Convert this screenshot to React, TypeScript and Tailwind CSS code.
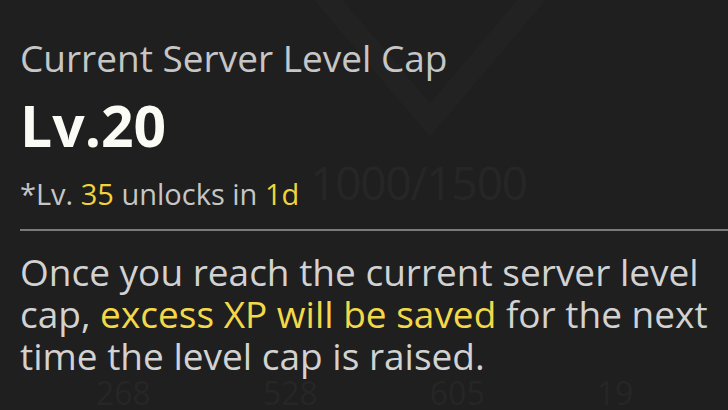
import React from "react";

const font = { fontFamily: "'Open Sans', Lato, sans-serif" };

function Backdrop() {
  // faint game UI showing through behind the tooltip
  return (
    <div className="pointer-events-none absolute inset-0 overflow-hidden text-[#262626]">
      <svg className="absolute left-[300px] top-[-20px]" width="260" height="160" viewBox="0 0 260 160" fill="none">
        <path d="M20 10 L130 140 L240 10" stroke="#222222" strokeWidth="22" />
      </svg>
      <div className="absolute left-[310px] top-[148px] text-[46px] tracking-tight">1000/1500</div>
      <div className="absolute inset-x-0 bottom-[3px] flex gap-[112px] pl-[96px] text-[32px] leading-[28px]">
        <span>268</span>
        <span>528</span>
        <span>605</span>
        <span>19</span>
      </div>
    </div>
  );
}

export default function App() {
  return (
    <div className="relative h-[410px] w-[728px] overflow-hidden bg-[#1f1f1f]" style={font}>
      <Backdrop />
      <div className="relative flex flex-col pl-[20px] pt-[36px]">
        <p className="text-[37px] leading-[44px] text-[#c6c6c6]">Current Server Level Cap</p>
        <p className="mt-[15px] text-[57px] font-bold leading-[60px] text-[#fbfbf6]">Lv.20</p>
        <p className="mt-[21px] text-[29px] leading-[36px] text-[#c6c6c6]">
          *Lv. <span className="text-[#f0d33c]">35</span> unlocks in{" "}
          <span className="text-[#f0d33c]">1d</span>
        </p>
        <div className="mt-[17px] h-[2px] bg-[#7a7a7a]" />
        <p className="mt-[20px] text-[37px] leading-[42px] whitespace-nowrap text-[#d2d2d2]">
          Once you reach the current server level
          <br />
          cap, <span className="text-[#f3d94a]">excess XP will be saved</span> for the next
          <br />
          time the level cap is raised.
        </p>
      </div>
    </div>
  );
}
